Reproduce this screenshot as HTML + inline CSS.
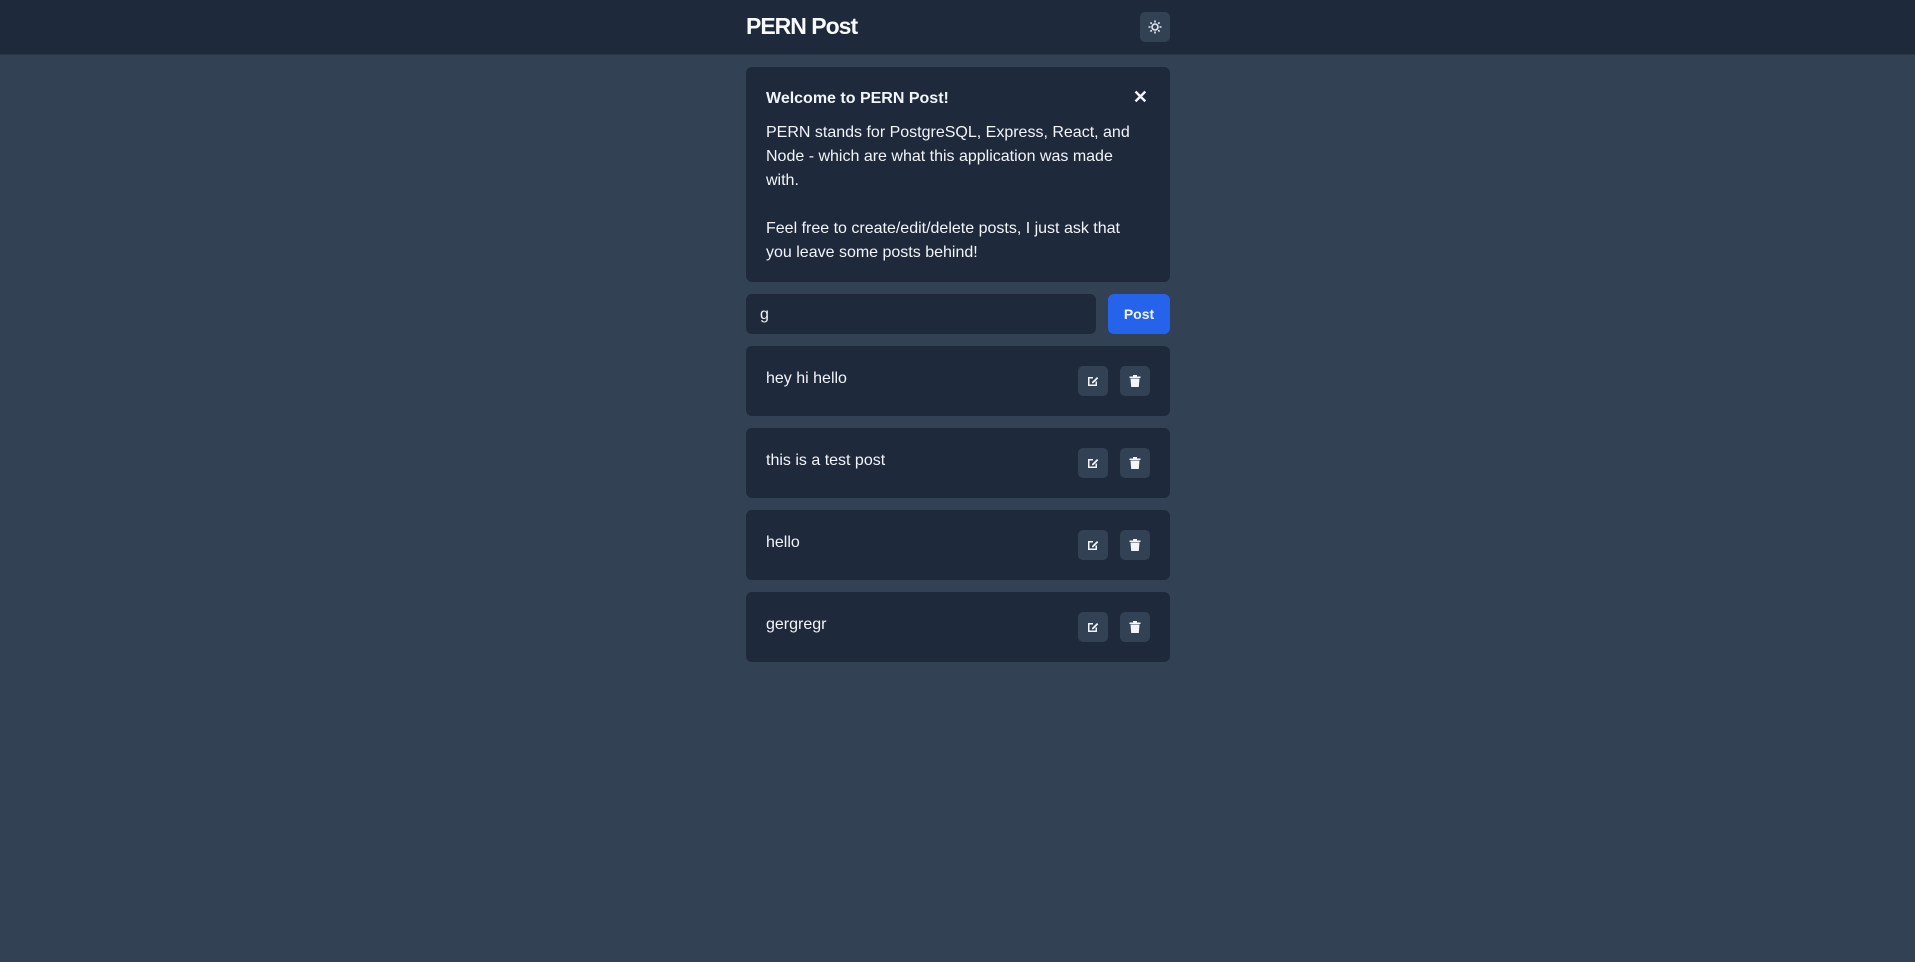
<!DOCTYPE html>
<html><head><style>
*{box-sizing:border-box;margin:0;padding:0}
body{width:1915px;height:962px;background:#334155;font-family:"Liberation Sans",sans-serif;color:#f1f5f9;overflow:hidden}
.hdr{height:55px;background:#1e293b;border-bottom:1px solid #2b3646;position:relative}
.logo{position:absolute;left:746px;top:13px;font-size:23px;font-weight:bold;letter-spacing:-1px;color:#f8fafc}
.theme{position:absolute;left:1140px;top:12px;width:30px;height:30px;background:#334155;border-radius:5px;display:flex;align-items:center;justify-content:center}
.wrap{position:absolute;left:746px;top:67px;width:424px}
.card{background:#1e293b;border-radius:6px;padding:22px 20px 17px;position:relative}
.welcome h3{font-size:16px;font-weight:bold;line-height:20px}
.welcome p{font-size:16px;line-height:24px;margin-top:12px}
.x{position:absolute;right:22px;top:20px;font-size:18px;font-weight:bold}
.row{display:flex;margin-top:12px;height:40px}
.inp{flex:0 0 350px;background:#1e293b;border-radius:6px;padding:0 14px;font-size:16px;line-height:42px}
.btn{margin-left:12px;flex:1;background:#2563eb;border-radius:6px;font-size:14px;font-weight:bold;display:flex;align-items:center;justify-content:center}
.post{height:70px;margin-top:12px;background:#1e293b;border-radius:6px;position:relative}
.post span{position:absolute;left:20px;top:23px;font-size:16px;line-height:20px}
.ib{position:absolute;top:20px;width:30px;height:30px;background:#334155;border-radius:5px;display:flex;align-items:center;justify-content:center}
</style></head><body>
<div class="hdr"><div class="logo">PERN Post</div>
<div class="theme"><svg width="14" height="14" viewBox="0 0 14 14" fill="none" stroke="#e2e8f0" stroke-width="1.6"><circle cx="7" cy="7" r="3"/><path d="M7 0.5v2M7 11.5v2M0.5 7h2M11.5 7h2M2.4 2.4l1.4 1.4M10.2 10.2l1.4 1.4M2.4 11.6l1.4-1.4M10.2 3.8l1.4-1.4"/></svg></div></div>
<div class="wrap">
<div class="card welcome"><h3>Welcome to PERN Post!</h3><div class="x">✕</div>
<p>PERN stands for PostgreSQL, Express, React, and Node - which are what this application was made with.<br><br>Feel free to create/edit/delete posts, I just ask that you leave some posts behind!</p></div>
<div class="row"><div class="inp">g</div><div class="btn">Post</div></div>
<div class="post"><span>hey hi hello</span><div class="ib" style="left:332px"><svg width="14" height="14" viewBox="0 0 14 14"><path d="M2 3h5v1.5H3.5v6h6V7.5H11V12H2z" fill="#f1f5f9"/><path d="M6 8l5-5 1.3 1.3-5 5H6z" fill="#f1f5f9"/></svg></div><div class="ib" style="left:374px"><svg width="12" height="14" viewBox="0 0 12 14" fill="#f1f5f9"><path d="M0.5 2.5h11v1.5h-11zM4 1h4v1.5H4zM1.5 4.5h9L9.8 13H2.2z"/></svg></div></div>
<div class="post"><span>this is a test post</span><div class="ib" style="left:332px"><svg width="14" height="14" viewBox="0 0 14 14"><path d="M2 3h5v1.5H3.5v6h6V7.5H11V12H2z" fill="#f1f5f9"/><path d="M6 8l5-5 1.3 1.3-5 5H6z" fill="#f1f5f9"/></svg></div><div class="ib" style="left:374px"><svg width="12" height="14" viewBox="0 0 12 14" fill="#f1f5f9"><path d="M0.5 2.5h11v1.5h-11zM4 1h4v1.5H4zM1.5 4.5h9L9.8 13H2.2z"/></svg></div></div>
<div class="post"><span>hello</span><div class="ib" style="left:332px"><svg width="14" height="14" viewBox="0 0 14 14"><path d="M2 3h5v1.5H3.5v6h6V7.5H11V12H2z" fill="#f1f5f9"/><path d="M6 8l5-5 1.3 1.3-5 5H6z" fill="#f1f5f9"/></svg></div><div class="ib" style="left:374px"><svg width="12" height="14" viewBox="0 0 12 14" fill="#f1f5f9"><path d="M0.5 2.5h11v1.5h-11zM4 1h4v1.5H4zM1.5 4.5h9L9.8 13H2.2z"/></svg></div></div>
<div class="post"><span>gergregr</span><div class="ib" style="left:332px"><svg width="14" height="14" viewBox="0 0 14 14"><path d="M2 3h5v1.5H3.5v6h6V7.5H11V12H2z" fill="#f1f5f9"/><path d="M6 8l5-5 1.3 1.3-5 5H6z" fill="#f1f5f9"/></svg></div><div class="ib" style="left:374px"><svg width="12" height="14" viewBox="0 0 12 14" fill="#f1f5f9"><path d="M0.5 2.5h11v1.5h-11zM4 1h4v1.5H4zM1.5 4.5h9L9.8 13H2.2z"/></svg></div></div>
</div>
</body></html>
